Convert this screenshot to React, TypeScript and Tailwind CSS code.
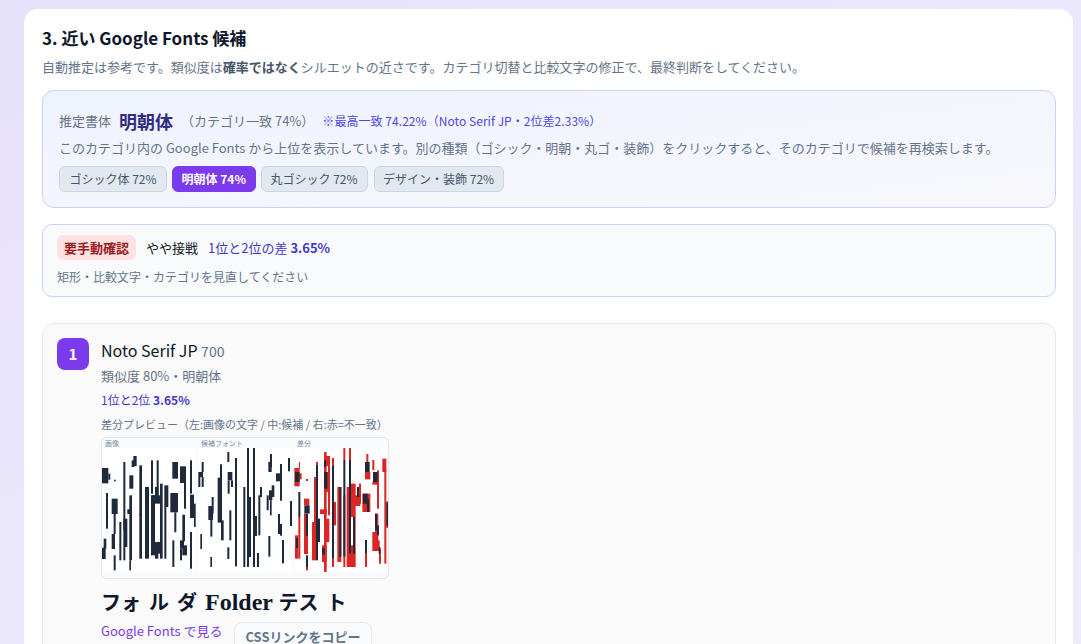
const dark = [
  [20,108,20,46],[40,125,6,18],[33,183,6,107],[20,347,12,34],[26,320,8,30],[57,143,5,5],[50,200,18,46],[56,246,6,60],[50,306,10,45],[56,370,6,45],
  [73,270,6,115],[85,90,6,205],[85,260,12,85],[85,345,6,40],[97,232,14,14],[103,190,8,195],[103,130,12,40],[103,385,5,30],[110,85,8,20],[115,72,10,30],
  [133,100,8,150],[133,245,8,135],[150,165,12,215],[168,85,6,100],[168,190,12,180],[185,85,6,120],[170,190,30,25],[180,165,10,30],[168,330,30,35],[180,360,10,20],
  [195,155,8,225],[208,160,12,65],[208,225,6,155],[232,90,17,50],[226,183,23,58],[238,241,6,60],[232,325,6,80],[255,103,18,50],[267,150,6,80],
  [262,248,8,80],[255,325,12,25],[262,340,14,30],[255,350,6,35],[285,85,6,100],[285,188,12,70],[297,215,5,70],[285,300,6,110],
  [397,60,6,30],[320,90,6,30],[310,120,14,15],[310,135,6,30],[320,135,6,30],[375,97,6,170],[368,137,12,135],[378,265,8,60],[398,120,14,25],[398,145,6,40],[408,145,6,20],
  [420,78,6,325],[445,165,6,240],[350,195,6,50],[340,222,14,42],[346,264,6,50],[316,306,5,45],[346,375,5,30],[403,235,6,90],[397,346,6,35],
];
const dark2 = [
  [6,48,6,357],[24,48,6,150],[10,195,8,180],[24,195,6,210],[30,252,6,60],[36,363,6,42],[75,66,6,40],[70,90,10,30],[105,96,6,110],[93,124,18,24],[129,78,6,40],[135,207,6,75],
  [45,165,6,30],[40,190,6,120],[65,190,6,45],[72,175,10,30],[80,160,8,35],[75,205,5,45],[99,246,6,60],[105,276,6,35],[70,312,6,62],[111,324,6,70],
];
const red = [
  [148,108,16,55],[164,124,6,18],[162,90,3,20],[150,310,10,70],[183,141,6,6],[177,200,16,20],[177,245,6,115],[177,306,12,60],[160,255,6,125],[183,405,6,10],
  [201,270,12,115],[207,135,8,135],[225,232,20,14],[213,90,6,8],[237,60,8,360],[231,340,14,50],[237,72,18,30],[243,120,10,60],[249,100,6,150],[243,260,10,70],[261,78,6,130],[261,210,12,70],
  [261,380,6,25],[277,165,12,225],[295,48,6,36],[312,48,6,36],[305,165,8,240],[295,190,6,215],[318,155,8,100],[324,155,8,250],[342,155,6,60],[320,190,26,32],
  [360,120,16,22],[364,66,6,30],[352,185,24,55],[382,84,6,30],[382,150,16,8],[396,115,6,115],[412,80,12,40],[418,110,6,285],[424,208,6,80],[390,245,10,100],[382,325,22,32],[402,350,6,45],[360,360,6,45],[382,300,8,30],[312,340,14,65],
];
const overlay = [
  [150,120,14,30],[160,180,6,75],[153,318,6,30],[178,220,16,25],[183,246,6,66],[183,370,6,35],[213,98,6,287],[231,348,8,20],[237,120,10,50],[237,85,6,20],[261,100,6,280],[219,260,6,70],[283,165,6,210],[295,84,6,290],[312,84,6,280],[324,255,6,110],[336,165,6,30],[360,90,14,30],[384,120,14,30],[354,185,14,30],[366,200,6,40],[390,245,6,50],[396,280,6,30],[360,324,6,40],[401,345,5,20],[424,212,6,70],
];

function Diff() {
  return (
    <svg width="286" height="140" viewBox="0 0 286 140" className="block">
      <rect x="0" y="10" width="93" height="124" fill="#ffffff" />
      <rect x="96" y="10" width="94" height="124" fill="#ffffff" />
      <rect x="192" y="10" width="94" height="124" fill="#ffffff" />
      <g transform="translate(-7,-6) scale(0.33333)">
        {dark.map(([x, y, w, h], i) => <rect key={i} x={x} y={y} width={w} height={h} fill="#1e293b" />)}
      </g>
      <g transform="translate(143,-6) scale(0.33333)">
        {dark2.map(([x, y, w, h], i) => <rect key={i} x={x} y={y} width={w} height={h} fill="#1e293b" />)}
        {red.map(([x, y, w, h], i) => <rect key={i} x={x} y={y} width={w} height={h} fill="#dc2626" />)}
        {overlay.map(([x, y, w, h], i) => <rect key={i} x={x} y={y} width={w} height={h} fill="#1e293b" />)}
      </g>
      <text x="3" y="8" fontSize="7" fill="#7c8aa0">画像</text>
      <text x="99" y="8" fontSize="7" fill="#7c8aa0">候補フォント</text>
      <text x="195" y="8" fontSize="7" fill="#7c8aa0">差分</text>
    </svg>
  );
}

export default function App() {
  return (
    <div className="h-screen overflow-hidden bg-gradient-to-br from-[#e7e2fb] to-[#eeebfd] pl-[24px] pr-[8px] pt-[9px] font-['Noto_Sans_CJK_JP',sans-serif] text-[#0f172a]">
      <div className="min-h-[700px] rounded-t-[14px] bg-white pl-[18px] pr-[17px] pt-[18px]">
        <h2 className="text-[17px] font-bold leading-[22px]">3. 近い Google Fonts 候補</h2>
        <p className="mt-[9px] text-[13px] leading-[18px] text-[#64748b]">
          自動推定は参考です。類似度は<b className="font-bold text-[#475569]">確率ではなく</b>シルエットの近さです。カテゴリ切替と比較文字の修正で、最終判断をしてください。
        </p>

        <div className="mt-[14px] h-[118px] rounded-[12px] border border-[#c7d2fe] bg-gradient-to-br from-[#eff3ff] to-[#f8f8fc] px-[16px] pt-[16px]">
          <div className="flex items-center leading-[28px] text-[#64748b]">
            <span className="text-[13px]">推定書体</span>
            <span className="ml-[8px] text-[18px] font-bold text-[#312e81]">明朝体</span>
            <span className="ml-[8px] text-[13px]">（カテゴリ一致 74%）</span>
            <span className="ml-[8px] text-[12px] tracking-[0.05px] text-[#4f46e5]">※最高一致 74.22%（Noto Serif JP・2位差2.33%）</span>
          </div>
          <p className="mt-[3px] text-[13px] leading-[20px] text-[#64748b]">
            このカテゴリ内の Google Fonts から上位を表示しています。別の種類（ゴシック・明朝・丸ゴ・装飾）をクリックすると、そのカテゴリで候補を再検索します。
          </p>
          <div className="mt-[8px] flex gap-[5px] text-[12px] leading-[16px]">
            <span className="rounded-[6px] border border-[#cbd5e1] bg-[#e2e8f0] px-[9.5px] py-[4px] text-[#475569]">ゴシック体 72%</span>
            <span className="rounded-[6px] border border-[#7c3aed] bg-[#7c3aed] px-[8.5px] py-[4px] font-bold text-white">明朝体 74%</span>
            <span className="rounded-[6px] border border-[#cbd5e1] bg-[#e2e8f0] px-[9px] py-[4px] text-[#475569]">丸ゴシック 72%</span>
            <span className="ml-[1px] rounded-[6px] border border-[#cbd5e1] bg-[#e2e8f0] px-[8.5px] py-[4px] text-[#475569]">デザイン・装飾 72%</span>
          </div>
        </div>

        <div className="mt-[16px] h-[73px] rounded-[10px] border border-[#c7d2fe] bg-[#f8fafc] px-[14px] pt-[10px]">
          <div className="flex items-center text-[13px] leading-[25px]">
            <span className="rounded-[6px] bg-[#fee2e2] px-[7px] font-bold text-[#991b1b]">要手動確認</span>
            <span className="ml-[10px] text-[#0f172a]">やや接戦</span>
            <span className="ml-[10px] text-[#4338ca]">1位と2位の差 <b className="font-bold">3.65%</b></span>
          </div>
          <p className="mt-[8px] text-[12px] leading-[18px] text-[#64748b]">矩形・比較文字・カテゴリを見直してください</p>
        </div>

        <div className="mt-[26px] flex gap-[12px] rounded-t-[12px] border border-[#e2e8f0] bg-[#fafafa] px-[14px] pt-[14px]">
          <div className="flex size-[32px] shrink-0 items-center justify-center rounded-[8px] bg-[#7c3aed] text-[15px] font-bold text-white">1</div>
          <div className="min-w-0">
            <div className="text-[16px] leading-[25px]">Noto Serif JP <span className="text-[14px] text-[#64748b]">700</span></div>
            <div className="mt-[2px] text-[13px] leading-[20px] text-[#64748b]">類似度 80%・明朝体</div>
            <div className="mt-[5px] text-[12px] leading-[18px] text-[#4338ca]">1位と2位 <b className="font-bold">3.65%</b></div>
            <div className="mt-[7px] text-[11px] leading-[16px] text-[#64748b]">差分プレビュー（左:画像の文字 / 中:候補 / 右:赤=不一致）</div>
            <div className="mt-[5px] h-[142px] w-[288px] overflow-hidden rounded-[6px] border border-[#e2e8f0] bg-[#f8fafc]">
              <Diff />
            </div>
            <div className="mt-[6px] whitespace-pre font-['Liberation_Serif','Noto_Sans_CJK_JP',serif] leading-[34px] text-[#0f172a]">
              <span className="text-[20px] font-bold [word-spacing:3px]">フォ ル ダ </span>
              <span className="text-[24px] font-bold">Folder </span>
              <span className="text-[20px] font-bold [word-spacing:3px]">テス ト</span>
            </div>
            <div className="mt-[0px] flex items-start gap-[12px]">
              <span className="text-[13px] leading-[18px] text-[#7c3aed]">Google Fonts で見る</span>
              <span className="rounded-[8px] border border-[#e2e8f0] bg-[#f8fafc] px-[10px] py-[5px] text-[13px] font-bold leading-[18px] text-[#64748b]">CSSリンクをコピー</span>
            </div>
          </div>
        </div>
      </div>
    </div>
  );
}
